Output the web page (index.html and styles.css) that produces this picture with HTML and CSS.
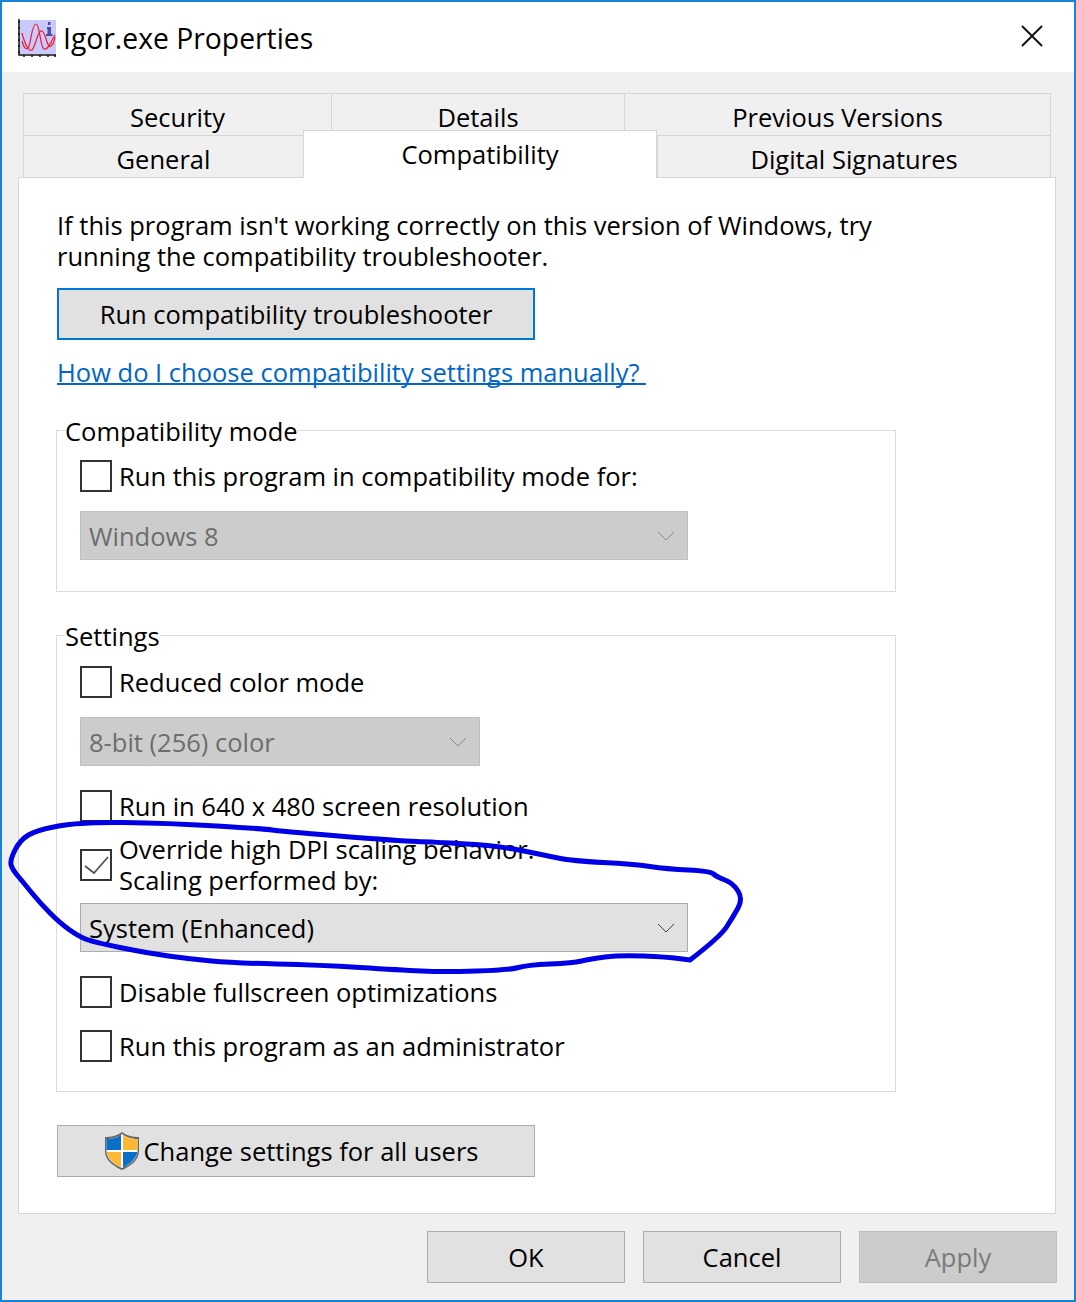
FILE: index.html
```html
<!DOCTYPE html>
<html lang="en">
<head>
    <meta charset="UTF-8">
    <meta name="viewport" content="width=device-width, initial-scale=1.0">
    <title>Igor.exe Properties</title>
    <link rel="stylesheet" href="styles.css">
</head>
<body>

<div class="window">
    <div class="title-bar">
        <svg class="app-icon" width="38" height="38" viewBox="0 0 38 38">
            <rect x="2" y="1" width="36" height="34" fill="#c9c9fb"/>
            <path d="M1 0V36H38M0 3H2M0 9H2M0 15H2M0 21H2M0 27H2M0 33H2M6 36V38M14 36V38M22 36V38M30 36V38M37 36V38" stroke="#111" stroke-width="1.5" fill="none"/>
            <path d="M4 22C6 30 9 32 11 27S14 5 18 5S22 28 26 30S33 22 37 16" stroke="#f01c2c" stroke-width="1.2" fill="none"/>
            <path d="M4 14C7 26 11 33 14 31S20 10 24 12S29 30 33 27S36 20 37 18" stroke="#f01c2c" stroke-width="1.2" fill="none"/>
            <path d="M29 8H33V15H34.500V17H28V15H29.500V10H29ZM30 3H32.500V6H30Z" fill="#4a4aa8"/>
        </svg>
        <span class="title-text">Igor.exe Properties</span>
        <svg class="close-icon" width="22" height="22" viewBox="0 0 22 22">
            <path d="M1 1L21 21M21 1L1 21" stroke="#111" stroke-width="2"/>
        </svg>
    </div>

    <div class="content">
        <div class="tabs">
            <div class="tab-row">
                <div class="tab tab-security">Security</div>
                <div class="tab tab-details">Details</div>
                <div class="tab tab-versions">Previous Versions</div>
            </div>
            <div class="tab-row">
                <div class="tab tab-general">General</div>
                <div class="tab tab-active">Compatibility</div>
                <div class="tab tab-signatures">Digital Signatures</div>
            </div>
        </div>

        <div class="panel">
            <p class="intro">If this program isn't working correctly on this version of Windows, try<br>running the compatibility troubleshooter.</p>
            <button class="wide-button focused">Run compatibility troubleshooter</button>
            <a class="help-link" href="#">How do I choose compatibility settings manually?&nbsp;</a>

            <div class="group group-mode">
                <div class="group-title">Compatibility mode</div>
                <div class="check-row first-row"><span class="box"></span>Run this program in compatibility mode for:</div>
                <div class="select disabled select-long">Windows 8
                    <svg class="chevron" width="18" height="10" viewBox="0 0 18 10"><path d="M1 1L9 9L17 1" stroke="#888" fill="none"/></svg>
                </div>
            </div>

            <div class="group group-settings">
                <div class="group-title">Settings</div>
                <div class="check-row first-row"><span class="box"></span>Reduced color mode</div>
                <div class="select disabled select-short">8-bit (256) color
                    <svg class="chevron" width="18" height="10" viewBox="0 0 18 10"><path d="M1 1L9 9L17 1" stroke="#888" fill="none"/></svg>
                </div>
                <div class="check-row row-640"><span class="box"></span>Run in 640 x 480 screen resolution</div>
                <div class="check-row row-dpi">
                    <span class="box">
                        <svg width="28" height="28" viewBox="0 0 28 28"><path d="M3 15L12 22L26 6" stroke="#555" stroke-width="1.800" fill="none"/></svg>
                    </span>
                    <span>Override high DPI scaling behavior.<br>Scaling performed by:</span>
                </div>
                <div class="select select-long select-dpi">System (Enhanced)
                    <svg class="chevron" width="18" height="10" viewBox="0 0 18 10"><path d="M1 1L9 9L17 1" stroke="#444" fill="none"/></svg>
                </div>
                <div class="check-row row-fullscreen"><span class="box"></span>Disable fullscreen optimizations</div>
                <div class="check-row row-admin"><span class="box"></span>Run this program as an administrator</div>
            </div>

            <button class="wide-button change-button">
                <svg width="38" height="40" viewBox="0 0 38 40">
                    <path d="M19 1C14 5 8 6 2 6V20C2 29 10 35 19 39C28 35 36 29 36 20V6C30 6 24 5 19 1Z" fill="#666"/>
                    <path d="M19 3C15 6.500 9 8 3.500 8V20C3.500 28 11 33.500 19 37C27 33.500 34.500 28 34.500 20V8C29 8 23 6.500 19 3Z" fill="#fff"/>
                    <path d="M18 3.500C14 7 9 8 3.500 8V19H18Z" fill="#0a6fc8"/>
                    <path d="M20 3.500C24 7 29 8 34.500 8V19H20Z" fill="#fdb936"/>
                    <path d="M3.500 21H18V36.500C11 33 5 28 3.500 21Z" fill="#fdb936"/>
                    <path d="M20 21H34.500C33 28 27 33 20 36.500Z" fill="#0a6fc8"/>
                </svg>
                <span>Change settings for all users</span>
            </button>
        </div>

        <div class="footer">
            <button class="footer-button">OK</button>
            <button class="footer-button">Cancel</button>
            <button class="footer-button apply">Apply</button>
        </div>
    </div>

    <!-- pen mark somebody drew on the screenshot -->
    <svg class="scribble" width="1076" height="1302" viewBox="0 0 1076 1302">
        <path d="M15 850Q10 860 11 864.500Q12 869 17.500 875.500Q23 882 31.500 892.500Q40 903 50 913Q60 923 69 929.500Q78 936 85.500 939Q93 942 120 947.500Q147 953 168.500 956Q190 959 211.500 961Q233 963 276.500 964Q320 965 360 967.500Q400 970 421.500 971Q443 972 476.500 971Q510 970 518.500 967.500Q527 965 550 964Q573 963 581.500 961Q590 959 605 957Q620 955 643.500 956Q667 957 678.500 958.500L690 960Q720 937 726.500 927Q733 917 738 908Q743 899 738 891Q733 883 725 880Q717 877 713.500 874Q710 871 688.500 870Q667 869 650 866.500Q633 864 603 862.500Q573 861 558 858Q543 855 521.500 850.500Q500 846 466.500 844Q433 842 416.500 841.500Q400 841 338.500 836Q277 831 272 830Q267 829 217 826Q167 823 123.500 822.500Q80 822 58.500 826Q37 830 28.500 835Q20 840 15 850Z" stroke="#0000e6" stroke-width="5" stroke-linejoin="round" fill="none"/>
    </svg>
</div>

</body>
</html>
```

FILE: styles.css
```css
* {
    box-sizing: border-box;
}

body {
    margin: 0;
    font-family: "Open Sans", "Noto Sans", Arial, sans-serif;
    font-size: 25.5px;
    color: #000;
}

.window {
    position: relative;
    width: 1076px;
    height: 1302px;
    border: 2px solid #1883d7;
    background-color: #f0f0f0;
    display: flex;
    flex-direction: column;
    overflow: hidden;
}

.title-bar {
    height: 70px;
    background-color: #fff;
    display: flex;
    align-items: center;
    padding: 0 31px 0 16px;
}

.title-text {
    font-size: 28.3px;
    margin-left: 7px;
    margin-top: 1px;
    flex: 1;
}

.app-icon {
    margin-top: 2px;
}

.close-icon {
    margin-bottom: 2px;
}

.content {
    flex: 1;
    padding: 21px 18px 0 16px;
}

/* tabs */
.tabs {
    margin: 0 3px 0 5px;
}

.tab-row {
    display: flex;
    height: 42px;
}

.tab {
    border: 1px solid #d6d6d6;
    border-right-width: 0;
    border-bottom-width: 0;
    background-color: #f0f0f0;
    text-align: center;
    line-height: 46px;
}

.tab-versions, .tab-signatures {
    border-right-width: 1px;
}

.tab-security { width: 308px; }
.tab-details { width: 293px; }
.tab-versions { width: 427px; }
.tab-general { width: 280px; }
.tab-signatures { width: 394px; }

.tab-active {
    width: 354px;
    height: 48px;
    margin-top: -5px;
    background-color: #fff;
    border-right-width: 1px;
    line-height: 46px;
    position: relative;
    z-index: 1;
}

/* main white area */
.panel {
    width: 1038px;
    height: 1037px;
    background-color: #fff;
    border: 1px solid #d6d6d6;
    padding: 32px 0 0 38px;
}

.intro {
    margin: 0;
    line-height: 31px;
}

.wide-button {
    display: flex;
    align-items: center;
    justify-content: center;
    gap: 3px;
    width: 478px;
    height: 52px;
    font: inherit;
    color: #000;
    background-color: #e1e1e1;
    border: 1px solid #adadad;
    padding: 0;
}

.wide-button.focused {
    margin-top: 16px;
    border: 2px solid #0078d7;
}

.help-link {
    display: block;
    margin-top: 15px;
    width: fit-content;
    line-height: 34px;
    color: #0066cc;
    text-decoration: none;
    border-bottom: 2px solid #0066cc;
    height: 30px;
}

.group {
    width: 840px;
    margin-left: -1px;
    border: 1px solid #dcdcdc;
    padding: 0 0 0 23px;
}

.group-title {
    width: fit-content;
    margin: -15px 0 0 -15px;
    background-color: #fff;
    line-height: 31px;
    height: 31px;
}

.group-mode {
    margin-top: 45px;
    height: 162px;
}

.group-settings {
    margin-top: 43px;
    height: 457px;
}

.check-row {
    display: flex;
    align-items: center;
    gap: 7px;
    line-height: 31px;
}

.first-row {
    margin-top: 13px;
}

.group-settings .first-row {
    margin-top: 14px;
}

.box {
    width: 32px;
    height: 32px;
    flex-shrink: 0;
    background-color: #fff;
    border: 2px solid #333;
    display: flex;
    align-items: center;
    justify-content: center;
}

.select {
    display: flex;
    align-items: center;
    justify-content: space-between;
    height: 49px;
    padding: 0 12px 0 8px;
    background-color: #e1e1e1;
    border: 1px solid #adadad;
}

.select.disabled {
    background-color: #ccc;
    border-color: #bfbfbf;
    color: #6d6d6d;
}

.select-long { width: 608px; }
.select-short { width: 400px; }

.first-row + .select {
    margin-top: 19px;
}

.row-640 { margin-top: 24px; }
.row-dpi { margin-top: 12px; }
.select-dpi { margin-top: 7px; }
.row-fullscreen { margin-top: 24px; }
.row-admin { margin-top: 22px; }

.change-button {
    margin-top: 33px;
    padding-right: 11px;
}

/* OK / Cancel / Apply */
.footer {
    display: flex;
    justify-content: flex-end;
    gap: 18px;
    margin-top: 17px;
    margin-right: -1px;
}

.footer-button {
    width: 198px;
    height: 52px;
    font: inherit;
    color: #000;
    background-color: #e1e1e1;
    border: 1px solid #adadad;
    padding: 0;
}

.footer-button.apply {
    background-color: #ccc;
    border-color: #bfbfbf;
    color: #7a7a7a;
}

.scribble {
    position: absolute;
    top: -2px;
    left: -2px;
    pointer-events: none;
    z-index: 2;
}
```
